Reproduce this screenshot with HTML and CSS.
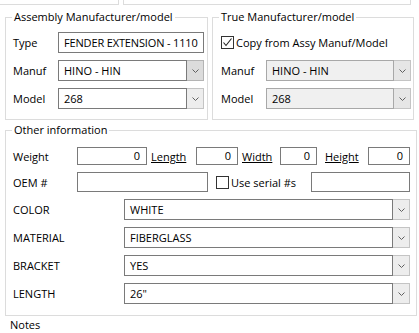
FILE: index.html
```html
<!DOCTYPE html>
<html lang="en">
<head>
  <meta charset="UTF-8" />
  <title>Part details</title>
  <link rel="stylesheet" href="styles.css">
</head>
<body>
  <div class="form">

    <!-- bottom edges of the groups scrolled above -->
    <div class="prev">
      <div class="prev-left"></div>
      <div class="prev-right"></div>
    </div>

    <div class="top-row">
      <!-- Assembly -->
      <fieldset class="group group-assy">
        <legend>Assembly Manufacturer/model</legend>
        <div class="grid">
          <span class="label">Type</span>
          <div class="textbox type">FENDER EXTENSION - 1110</div>

          <span class="label">Manuf</span>
          <div class="combo">
            <div class="combo-field">HINO - HIN</div>
            <div class="combo-btn hover"><svg width="7" height="4" viewBox="0 0 7 4"><polyline points="0.5,0.5 3.5,3.5 6.5,0.5" fill="none" stroke="#606060"/></svg></div>
          </div>

          <span class="label">Model</span>
          <div class="combo">
            <div class="combo-field">268</div>
            <div class="combo-btn"><svg width="7" height="4" viewBox="0 0 7 4"><polyline points="0.5,0.5 3.5,3.5 6.5,0.5" fill="none" stroke="#606060"/></svg></div>
          </div>
        </div>
      </fieldset>

      <!-- True -->
      <fieldset class="group group-true">
        <legend>True Manufacturer/model</legend>
        <div class="grid">
          <div class="check-row">
            <span class="checkbox"><svg width="11" height="11" viewBox="0 0 11 11"><polyline points="1.5,5.5 4,8.5 9.5,1.5" fill="none" stroke="#222" stroke-width="1.1"/></svg></span>
            <span>Copy from Assy Manuf/Model</span>
          </div>

          <span class="label">Manuf</span>
          <div class="combo disabled">
            <div class="combo-field">HINO - HIN</div>
            <div class="combo-btn"><svg width="7" height="4" viewBox="0 0 7 4"><polyline points="0.5,0.5 3.5,3.5 6.5,0.5" fill="none" stroke="#606060"/></svg></div>
          </div>

          <span class="label">Model</span>
          <div class="combo disabled">
            <div class="combo-field">268</div>
            <div class="combo-btn"><svg width="7" height="4" viewBox="0 0 7 4"><polyline points="0.5,0.5 3.5,3.5 6.5,0.5" fill="none" stroke="#606060"/></svg></div>
          </div>
        </div>
      </fieldset>
    </div>

    <!-- Other information -->
    <fieldset class="group group-other">
      <legend>Other information</legend>
      <div class="rows">
        <div class="row row-dims">
          <span class="label label-wide">Weight</span>
          <div class="numbox w-weight">0</div>
          <span class="link l-length">Length</span>
          <div class="numbox w-length">0</div>
          <span class="link l-width">Width</span>
          <div class="numbox w-width">0</div>
          <span class="link l-height">Height</span>
          <div class="numbox w-height">0</div>
        </div>

        <div class="row row-oem">
          <span class="label label-wide">OEM #</span>
          <div class="textbox oem"></div>
          <span class="checkbox serial-check"></span>
          <span class="serial-label">Use serial #s</span>
          <div class="textbox serial"></div>
        </div>

        <div class="row row-attr">
          <span class="label label-attr">COLOR</span>
          <div class="combo">
            <div class="combo-field">WHITE</div>
            <div class="combo-btn"><svg width="7" height="4" viewBox="0 0 7 4"><polyline points="0.5,0.5 3.5,3.5 6.5,0.5" fill="none" stroke="#606060"/></svg></div>
          </div>
        </div>

        <div class="row row-attr">
          <span class="label label-attr">MATERIAL</span>
          <div class="combo">
            <div class="combo-field">FIBERGLASS</div>
            <div class="combo-btn"><svg width="7" height="4" viewBox="0 0 7 4"><polyline points="0.5,0.5 3.5,3.5 6.5,0.5" fill="none" stroke="#606060"/></svg></div>
          </div>
        </div>

        <div class="row row-attr">
          <span class="label label-attr">BRACKET</span>
          <div class="combo">
            <div class="combo-field">YES</div>
            <div class="combo-btn"><svg width="7" height="4" viewBox="0 0 7 4"><polyline points="0.5,0.5 3.5,3.5 6.5,0.5" fill="none" stroke="#606060"/></svg></div>
          </div>
        </div>

        <div class="row row-attr">
          <span class="label label-attr">LENGTH</span>
          <div class="combo">
            <div class="combo-field">26"</div>
            <div class="combo-btn"><svg width="7" height="4" viewBox="0 0 7 4"><polyline points="0.5,0.5 3.5,3.5 6.5,0.5" fill="none" stroke="#606060"/></svg></div>
          </div>
        </div>
      </div>
    </fieldset>

    <div class="notes">Notes</div>
  </div>
</body>
</html>
```

FILE: styles.css
```css
/* — Base — */
* { box-sizing: border-box; margin: 0; padding: 0; }
body {
  font-family: "Open Sans", "Noto Sans", sans-serif;
  font-size: 11px;
  color: #000;
  background: #fff;
  width: 419px;
  height: 333px;
  overflow: hidden;
}

/* — Groups scrolled above — */
.prev { display: flex; height: 5px; }
.prev-left {
  width: 119px;
  border-right: 1px solid #dcdcdc;
  border-bottom: 1px solid #dcdcdc;
}
.prev-right {
  width: 288px; margin-left: 4px;
  border: 1px solid #dcdcdc; border-top: none;
}

/* — Group boxes — */
.group {
  border: 1px solid #dcdcdc;
  padding: 0;
}
.group legend {
  margin-left: 6px;
  padding: 0 2px;
  line-height: 16px;
}
.top-row {
  display: flex; gap: 4px;
  margin-top: 4px; padding-left: 5px;
}
.group-assy { width: 203px; }
.group-true { width: 202px; }

.grid {
  display: grid;
  grid-template-columns: 45px 1fr;
  grid-auto-rows: 21px;
  row-gap: 7px;
  align-items: center;
  padding: 7px 3px 10px 7px;
}
.group-true .grid { padding: 7px 2px 10px 8px; }
.check-row {
  grid-column: 1 / span 2;
  display: flex; align-items: center; gap: 2px;
}

/* — Inputs — */
.textbox {
  height: 21px;
  border: 1px solid #7a7a7a;
  background: #fff;
  padding-left: 5px;
  line-height: 19px;
  white-space: nowrap; overflow: hidden;
}
.textbox.type { letter-spacing: -0.15px; }
.combo { display: flex; height: 21px; }
.combo-field {
  flex: 1;
  border: 1px solid #7a7a7a;
  background: #fff;
  padding-left: 5px;
  line-height: 19px;
  white-space: nowrap; overflow: hidden;
}
.combo-btn {
  width: 17px;
  border: 1px solid #c4c4c4; border-left: none;
  background: #ededed;
  display: flex; align-items: center; justify-content: center;
}
.combo-btn.hover { background: #dcdcdc; border-color: #b4b4b4; }
.combo.disabled .combo-field { background: #f0f0f0; border-color: #a8a8a8; }
.combo.disabled .combo-btn { background: #e6e6e6; }

.checkbox {
  width: 13px; height: 13px;
  border: 1px solid #333;
  background: #fff;
  display: inline-flex; align-items: center; justify-content: center;
}

/* — Other information — */
.group-other {
  width: 412px;
  margin: 2px 0 0 5px;
}
.rows {
  display: flex; flex-direction: column; gap: 7px;
  padding: 9px 6px 11px 7px;
}
.row { display: flex; align-items: center; }
.label-wide { width: 64px; }
.label-attr { width: 111px; }
.row-dims { height: 18px; }
.row-oem { height: 20px; }
.row-attr { height: 21px; }
.row-attr .combo { flex: 1; }

.numbox {
  height: 18px;
  border: 1px solid #7a7a7a;
  text-align: right;
  padding-right: 6px;
  line-height: 16px;
}
.link { text-decoration: underline; }
.w-weight { width: 70px; }
.l-length { width: 45px; margin-left: 4px; }
.w-length { width: 42px; }
.l-width { width: 38px; margin-left: 4px; }
.w-width { width: 37px; }
.l-height { width: 43px; margin-left: 8px; }
.w-height { width: 42px; }

.oem { width: 131px; height: 20px; }
.serial-check { margin-left: 8px; }
.serial-label { margin-left: 2px; }
.serial { width: 99px; height: 20px; margin-left: auto; }

/* — Notes — */
.notes {
  margin: 1px 0 0 10px;
  line-height: 16px;
}
```
